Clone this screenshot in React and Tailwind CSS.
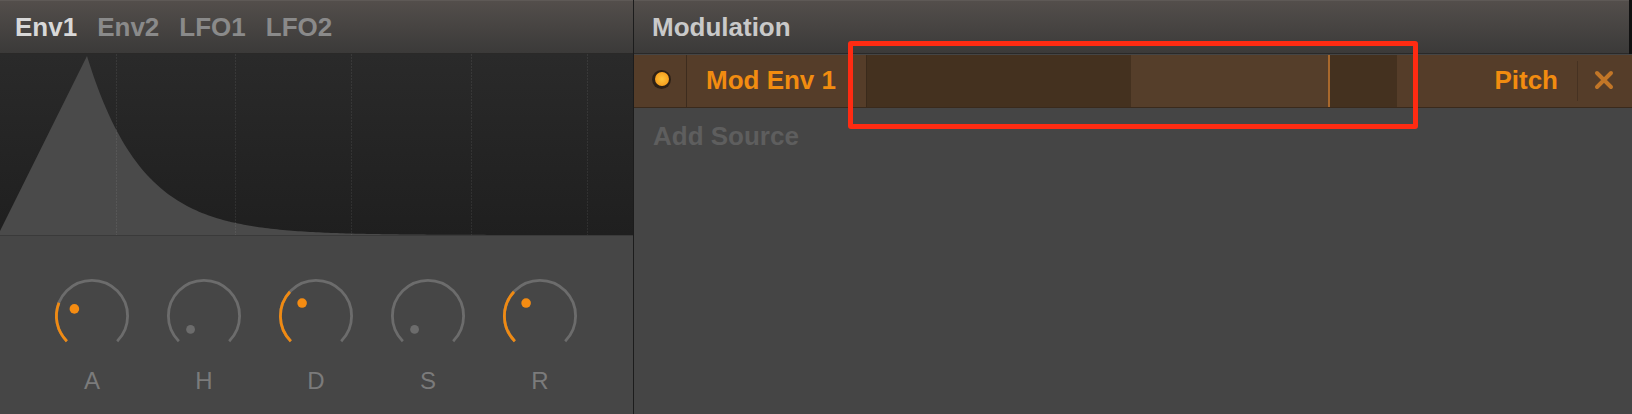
import React from "react";

const FONT = { fontFamily: '"Liberation Sans", Arial, sans-serif' };

function polar(cx, cy, r, a) {
  const rad = (a * Math.PI) / 180;
  return [cx + r * Math.sin(rad), cy - r * Math.cos(rad)];
}

function arc(cx, cy, r, a0, a1) {
  const [x0, y0] = polar(cx, cy, r, a0);
  const [x1, y1] = polar(cx, cy, r, a1);
  const large = a1 - a0 > 180 ? 1 : 0;
  return `M ${x0.toFixed(2)} ${y0.toFixed(2)} A ${r} ${r} 0 ${large} 1 ${x1.toFixed(2)} ${y1.toFixed(2)}`;
}

function Knob({ value, active }) {
  const [dx, dy] = polar(40, 40, 19, value);
  return (
    <svg width="80" height="80" viewBox="0 0 80 80">
      <path d={arc(40, 40, 35.6, -135, 135)} fill="none" stroke="#6c6c6c" strokeWidth="2.8" />
      {active && (
        <path d={arc(40, 40, 35.6, -135, value)} fill="none" stroke="#f08a12" strokeWidth="2.8" />
      )}
      <circle cx={dx} cy={dy} r={active ? 4.8 : 4.4} fill={active ? "#f58c12" : "#6c6c6c"} />
    </svg>
  );
}

function envelopePath() {
  let d = "M -2 181 L 87 2";
  for (let x = 88; x <= 634; x += 3) {
    const y = 181 - 179 * Math.exp(-(x - 87) / 55);
    d += ` L ${x} ${y.toFixed(2)}`;
  }
  d += " L 634 181 Z";
  return d;
}

const knobs = [
  { label: "A", value: -68, active: true },
  { label: "H", value: -135, active: false },
  { label: "D", value: -47, active: true },
  { label: "S", value: -135, active: false },
  { label: "R", value: -47, active: true },
];

export default function App() {
  return (
    <div className="relative flex w-[1632px] h-[414px] overflow-hidden bg-[#454545]" style={FONT}>
      {/* Left panel */}
      <div className="flex flex-col w-[633px] h-full">
        <div className="flex items-center gap-[20px] h-[54px] pl-[15px] bg-linear-to-b from-[#534e4b] to-[#3b3a39] border-t border-[#5e5956] border-b border-b-[#2a2928] text-[26px] font-bold">
          <span className="text-[#d8d8d8]">Env1</span>
          <span className="text-[#8a8a8a]">Env2</span>
          <span className="text-[#8a8a8a]">LFO1</span>
          <span className="text-[#8a8a8a]">LFO2</span>
        </div>
        <div className="relative h-[182px] bg-linear-to-b from-[#2a2a2a] to-[#1f1f1f] border-b border-[#3a3a3a]">
          <svg width="633" height="181" viewBox="0 0 633 181" className="block">
            <path d={envelopePath()} fill="#4a4a4a" />
            {[116, 235, 351, 471, 587].map((x) => (
              <line key={x} x1={x + 0.5} y1="0" x2={x + 0.5} y2="181" stroke="#ffffff" strokeOpacity="0.07" strokeWidth="1" strokeDasharray="2 1" />
            ))}
          </svg>
        </div>
        <div className="flex-1 bg-[#464646] flex pl-[36px] pt-[40px]">
          {knobs.map((k) => (
            <div key={k.label} className="flex flex-col items-center w-[112px]">
              <Knob value={k.value} active={k.active} />
              <span className="mt-[11px] text-[24px] leading-[28px] text-[#7b7b7b]">{k.label}</span>
            </div>
          ))}
        </div>
      </div>

      {/* Divider */}
      <div className="w-px h-full bg-[#1c1c1c]" />

      {/* Right panel */}
      <div className="flex flex-col flex-1 h-full">
        <div className="flex">
          <div className="flex-1 flex items-center h-[54px] pl-[18px] bg-linear-to-b from-[#534e4b] to-[#3b3a39] border-t border-[#5e5956] border-b border-b-[#2a2928] text-[26px] font-bold text-[#c9c9c9]">
            Modulation
          </div>
          <div className="w-[3px] h-[54px] bg-[#111111]" />
        </div>
        <div className="flex h-[53px] mt-px bg-[#553d29] border-b border-[#3a2a1c]">
          <div className="flex items-center justify-center w-[53px] border-r border-[#3d2c1e]">
            <div className="flex items-center justify-center w-[19px] h-[19px] ml-[3px] mt-[-4px] rounded-full bg-[#2c2016]">
              <div className="w-[14px] h-[14px] rounded-full bg-radial from-[#ffc43a] to-[#f0900e]" />
            </div>
          </div>
          <div className="flex items-center w-[179px] pl-[19px] text-[26px] font-bold text-[#f28c10] mt-[-2px]">
            Mod Env 1
          </div>
          <div className="flex w-[531px]">
            <div className="w-[265px] bg-[#44311f] border-l border-[#3a2a1b]" />
            <div className="w-[197px] bg-[#553e2a]" />
            <div className="w-[2px] bg-[#a8682c]" />
            <div className="flex-1 bg-[#44311f]" />
          </div>
          <div className="flex-1 flex items-center justify-end pr-[19px] text-[26px] font-bold text-[#f28c10] mt-[-2px]">
            Pitch
          </div>
          <div className="w-px my-[6px] bg-[#463222]" />
          <div className="flex items-center justify-center w-[51px] mr-[3px]">
            <svg width="20" height="20" viewBox="0 0 20 20" className="mt-[-3px]">
              <path d="M 3 3 L 17 17 M 17 3 L 3 17" stroke="#c27627" strokeWidth="4" strokeLinecap="round" />
            </svg>
          </div>
        </div>
        <div className="pl-[19px] pt-[13px] text-[26px] leading-[30px] font-bold text-[#5e5e5e]">
          Add Source
        </div>
      </div>

      {/* Red annotation box */}
      <div className="absolute left-[848px] top-[41px] w-[570px] h-[88px] border-[5px] border-[#ff2b12] rounded-[3px]" />
    </div>
  );
}
